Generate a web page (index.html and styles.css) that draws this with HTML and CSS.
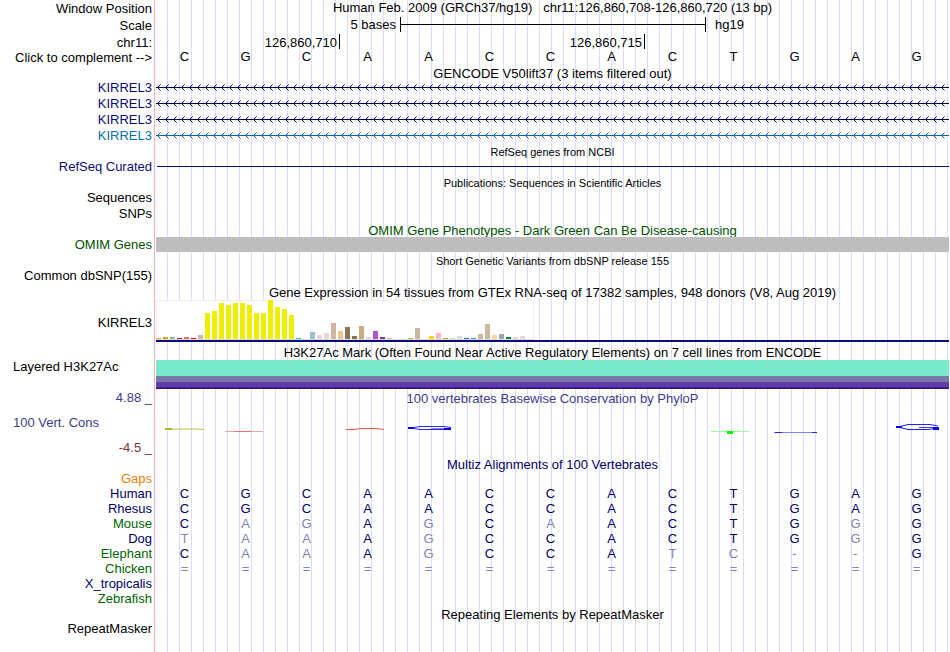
FILE: index.html
```
<!DOCTYPE html>
<html lang="en">
<head>
<meta charset="utf-8">
<title>UCSC Genome Browser chr11:126,860,708-126,860,720</title>
<link rel="stylesheet" href="styles.css">
</head>
<body>
<main class="browser">
  <section class="row ruler"><div class="label">Window Position</div><h1 class="title tight">Human Feb. 2009 (GRCh37/hg19) &nbsp; chr11:126,860,708-126,860,720 (13 bp)</h1></section>
  <section class="row ruler"><div class="label">Scale</div><div class="bases tight">
    <span class="tick-text scale-from">5 bases</span><span class="scale-bar"></span><span class="scale-to">hg19</span></div></section>
  <section class="row ruler"><div class="label">chr11:</div><div class="bases">
    <span class="tick-text mark mark-a">126,860,710</span><span class="tick-text mark mark-b">126,860,715</span></div></section>
  <section class="row sequence"><div class="label">Click to complement --&gt;</div><div class="bases"><span>C</span><span>G</span><span>C</span><span>A</span><span>A</span><span>C</span><span>C</span><span>A</span><span>C</span><span>T</span><span>G</span><span>A</span><span>G</span></div></section>

  <section class="row gap-title"><h2 class="title">GENCODE V50lift37 (3 items filtered out)</h2></section>
  <svg class="defs" aria-hidden="true"><defs>
    <pattern id="chevron-navy" width="8" height="16" patternUnits="userSpaceOnUse"><path d="M0 7.5H8" stroke="#000064"/><path d="M4.5 4.5L1.5 7.5L4.5 10.5" fill="none" stroke="#000064"/></pattern>
    <pattern id="chevron-blue" width="8" height="16" patternUnits="userSpaceOnUse"><path d="M0 7.5H8" stroke="#0c64a0"/><path d="M4.5 4.5L1.5 7.5L4.5 10.5" fill="none" stroke="#0c64a0"/></pattern>
  </defs></svg>
  <section class="row navy"><div class="label">KIRREL3</div><svg class="gene"><rect width="100%" height="16" fill="url(#chevron-navy)"/></svg></section>
  <section class="row navy"><div class="label">KIRREL3</div><svg class="gene"><rect width="100%" height="16" fill="url(#chevron-navy)"/></svg></section>
  <section class="row navy"><div class="label">KIRREL3</div><svg class="gene"><rect width="100%" height="16" fill="url(#chevron-navy)"/></svg></section>
  <section class="row blue"><div class="label">KIRREL3</div><svg class="gene"><rect width="100%" height="16" fill="url(#chevron-blue)"/></svg></section>

  <section class="row heading"><h2 class="title small">RefSeq genes from NCBI</h2></section>
  <section class="row navy"><div class="label">RefSeq Curated</div><div class="refseq"></div></section>
  <section class="row heading"><h2 class="title small">Publications: Sequences in Scientific Articles</h2></section>
  <section class="row"><div class="label">Sequences</div></section>
  <section class="row"><div class="label">SNPs</div></section>
  <section class="row heading green"><h2 class="title">OMIM Gene Phenotypes - Dark Green Can Be Disease-causing</h2></section>
  <section class="row green"><div class="label">OMIM Genes</div><div class="omim"></div></section>
  <section class="row heading"><h2 class="title small">Short Genetic Variants from dbSNP release 155</h2></section>
  <section class="row"><div class="label">Common dbSNP(155)</div></section>

  <section class="row heading gtex-title"><h2 class="title">Gene Expression in 54 tissues from GTEx RNA-seq of 17382 samples, 948 donors (V8, Aug 2019)</h2></section>
  <section class="row gtex"><div class="label">KIRREL3</div><div class="expression">
    <svg width="378" height="40" shape-rendering="crispEdges">
      <path d="M.5 39.5V.5H377.5V39.5" fill="#fff" stroke="#f0f0f0"/>
      <path d="M0 39.5H378" stroke="#dcdcdc"/>
      <g fill="#eeee00"><path d="M49 39v-26h5v26zM56 39v-28h5v28zM63 39v-36h5v36zM70 39v-34h5v34zM77 39v-36h5v36zM84 39v-36h5v36zM91 39v-34h5v34zM98 39v-26h5v26zM105 39v-26h5v26zM112 39v-39h5v39zM119 39v-32h5v32zM126 39v-30h5v30zM133 39v-24h5v24z"/></g>
      <g fill="#cdb79e"><path d="M42 39v-4h5v4zM175 39v-16h5v16zM231 39v-1h5v1zM259 39v-11h5v11zM322 39v-5h5v5zM329 39v-15h5v15z"/></g>
      <g fill="#eed5d2"><path d="M161 39v-4h5v4zM168 39v-6h5v6zM210 39v-2h5v2zM357 39v-2h5v2zM364 39v-3h5v3z"/></g>
      <path d="M0 38h5v1h-5z" fill="#ffa54f"/><path d="M7 37h5v2h-5z" fill="#ee9a00"/><path d="M14 37h5v2h-5z" fill="#8fbc8f"/><path d="M21 38h5v1h-5z" fill="#8b1c62"/><path d="M28 37h5v2h-5z" fill="#ee6a50"/><path d="M35 38h5v1h-5z" fill="#ff0000"/>
      <path d="M140 38h5v1h-5z" fill="#00cdcd"/><path d="M154 32h5v7h-5z" fill="#9ac0cd"/><path d="M182 31h5v8h-5z" fill="#eec591"/><path d="M189 27h5v12h-5zM196 36h5v3h-5z" fill="#8b7355"/><path d="M203 26h5v13h-5z" fill="#cdaa7d"/><path d="M217 31h5v8h-5z" fill="#b452cd"/><path d="M224 37h5v2h-5z" fill="#7a378b"/>
      <path d="M252 38h5v1h-5z" fill="#9acd32"/><path d="M273 36h5v3h-5z" fill="#ffd700"/><path d="M280 33h5v6h-5z" fill="#ffb6c1"/><path d="M287 38h5v1h-5z" fill="#cd9b1d"/><path d="M294 38h5v1h-5z" fill="#b4eeb4"/><path d="M301 36h5v3h-5z" fill="#d9d9d9"/><path d="M308 38h5v1h-5z" fill="#3a5fcd"/><path d="M315 38h5v1h-5z" fill="#1e90ff"/><path d="M336 35h5v4h-5z" fill="#ffd39b"/><path d="M343 34h5v5h-5z" fill="#a6a6a6"/><path d="M350 37h5v2h-5z" fill="#008b45"/>
    </svg></div></section>

  <section class="row align"><h2 class="title">H3K27Ac Mark (Often Found Near Active Regulatory Elements) on 7 cell lines from ENCODE</h2></section>
  <section class="row histone-row"><div class="label start">Layered H3K27Ac</div><div class="histone"></div></section>

  <section class="row phylop"><div class="scale-labels"><span class="limit high">4.88 _</span><span class="start high">100 Vert. Cons</span><span class="limit low">-4.5 _</span></div>
    <div><h2 class="title high phylop-title">100 vertebrates Basewise Conservation by PhyloP</h2>
    <svg class="logos" viewBox="0 0 793 50" preserveAspectRatio="none" fill="none">
      <path d="M9 22.5C15 24 20 23 28 23H40L48 23.5" stroke="#bebe46"/><path d="M9 23H16" stroke="#b4b432" stroke-width="2"/>
      <path d="M69 25.5H107" stroke="#f0a0a0"/><path d="M78 25.5H95" stroke="#e66e6e"/>
      <path d="M190 23.5H198L205 22.5H220L228 23.5" stroke="#ff5046"/>
      <path d="M295 21.5L288 20.5H264L254 22L264 23.500H294" stroke="#2828ff"/><path d="M275 22.5H294" stroke="#8282ff"/><path d="M252 22H258M288 23H295" stroke="#0000ff" stroke-width="2"/>
      <path d="M555 25.500H593" stroke="#96ff96"/><path d="M571 25h6v3h-6z" fill="#00ff00"/>
      <path d="M618 26.500H661" stroke="#8282ff"/><path d="M619 26.500H626M656 26.500H661" stroke="#1e1eff"/>
      <path d="M782 20L774 18.500H752L742 21L752 23.500H772L782 22" stroke="#1e1eff"/><path d="M763 21.500H782" stroke="#3c3cff"/><path d="M740 21H746" stroke="#0000ff" stroke-width="2"/><path d="M777 21h6v3h-6z" fill="#0000ff"/>
    </svg></div></section>

  <section class="row heading multiz"><h2 class="title">Multiz Alignments of 100 Vertebrates</h2></section>
  <section class="row align gaps"><div class="label">Gaps</div></section>
  <section class="row align multiz"><div class="label">Human</div><div class="bases"><span>C</span><span>G</span><span>C</span><span>A</span><span>A</span><span>C</span><span>C</span><span>A</span><span>C</span><span>T</span><span>G</span><span>A</span><span>G</span></div></section>
  <section class="row align multiz"><div class="label">Rhesus</div><div class="bases"><span>C</span><span>G</span><span>C</span><span>A</span><span>A</span><span>C</span><span>C</span><span>A</span><span>C</span><span>T</span><span>G</span><span>A</span><span>G</span></div></section>
  <section class="row align multiz"><div class="label green">Mouse</div><div class="bases"><span>C</span><i>A</i><i>G</i><span>A</span><i>G</i><span>C</span><i>A</i><span>A</span><span>C</span><span>T</span><span>G</span><i>G</i><span>G</span></div></section>
  <section class="row align multiz"><div class="label">Dog</div><div class="bases"><i>T</i><i>A</i><i>A</i><span>A</span><i>G</i><span>C</span><span>C</span><span>A</span><span>C</span><span>T</span><span>G</span><i>G</i><span>G</span></div></section>
  <section class="row align multiz"><div class="label green">Elephant</div><div class="bases"><span>C</span><i>A</i><i>A</i><span>A</span><i>G</i><span>C</span><span>C</span><span>A</span><i>T</i><i>C</i><i>-</i><i>-</i><span>G</span></div></section>
  <section class="row align multiz"><div class="label green">Chicken</div><div class="bases"><i>=</i><i>=</i><i>=</i><i>=</i><i>=</i><i>=</i><i>=</i><i>=</i><i>=</i><i>=</i><i>=</i><i>=</i><i>=</i></div></section>
  <section class="row align multiz"><div class="label">X_tropicalis</div></section>
  <section class="row align multiz"><div class="label green">Zebrafish</div></section>
  <section class="row heading"><h2 class="title">Repeating Elements by RepeatMasker</h2></section>
  <section class="row"><div class="label">RepeatMasker</div></section>
</main>
</body>
</html>
```
FILE: styles.css
```
* { box-sizing: border-box; }

body {
  margin: 0;
  background: #fff;
  color: #000;
  font: 13px/16px "Liberation Sans", Arial, sans-serif;
}

/* Red separator, blank label column, then the 12px guide lines. */
.browser {
  min-height: 100vh;
  padding-right: 1px;
  background:
    linear-gradient(#ffb4b4, #ffb4b4) 154px 0 / 1px 100% no-repeat,
    linear-gradient(#fff, #fff) 0 0 / 160px 100% no-repeat,
    linear-gradient(to right, #dcdcf8 1px, transparent 1px) 167px 0 / 12px 100% repeat-x;
}

.row {
  display: grid;
  grid-template-columns: 152px minmax(0, 1fr);
  column-gap: 4px;
  min-height: 16px;
}

.ruler { min-height: 17px; line-height: 17px; }
.sequence { min-height: 15px; line-height: 14px; }
.sequence .bases { line-height: 12px; }
.align { min-height: 15px; line-height: 15px; }
.heading { min-height: 15px; padding-top: 2px; line-height: 13px; }
.gap-title { min-height: 14px; padding-top: 1px; line-height: 13px; }
.gtex-title { min-height: 16px; }

.label { text-align: right; white-space: nowrap; }
.start { text-align: left; padding-left: 13px; }

.title {
  grid-column: 2;
  margin: 0;
  font-size: 13px;
  font-weight: normal;
  line-height: inherit;
  text-align: center;
  white-space: nowrap;
}
.small { font-size: 11px; }
.tight { line-height: 15px; }

.navy { color: #0c0c78; }
.blue { color: #0c6eaa; }
.green { color: #005000; }
.multiz { color: #000064; }
.multiz .green { color: #006400; }
.gaps { color: #e6820a; }
.high { color: #3c3c8c; }
.low { color: #783232; }

.bases {
  display: grid;
  grid-template-columns: repeat(13, 1fr);
  margin: 0 2px 0 -2px;
  text-align: center;
}
.bases i { font-style: normal; color: #8282b4; }

.tick-text { text-align: right; white-space: nowrap; }
.scale-from { grid-column: 1 / 5; padding-right: 2px; }
.scale-bar {
  grid-column: 5 / 10;
  height: 15px;
  margin: 0 -3px 0 2px;
  border: solid #000;
  border-width: 0 1px;
  background: linear-gradient(#000, #000) 0 7px / 100% 1px no-repeat;
}
.scale-to { grid-column: 10 / 12; padding-left: 12px; text-align: left; }
.mark { height: 15px; margin-right: -3px; padding-right: 2px; border-right: 1px solid #000; }
.mark-a { grid-column: 1 / 4; }
.mark-b { grid-column: 4 / 9; }

.defs { display: block; width: 0; height: 0; }
.gene { display: block; width: 100%; height: 16px; }
.refseq { height: 1px; margin: 7px 0 0 1px; background: #0c0c78; }
.omim { height: 15px; background: #bebebe; }

.gtex { min-height: 45px; line-height: 45px; }
.expression { align-self: start; border-bottom: 2px solid #0c0c78; }
.expression svg { display: block; }

.histone-row { min-height: 30px; line-height: 14px; }
.histone {
  height: 29px;
  background: linear-gradient(#78ebcd 16px, #7878aa 16px 22px, #643caa 22px 27px, #3c1ea0 27px 28px, #32146e 28px);
}

.phylop { min-height: 66px; }
.phylop-title { padding-top: 1px; line-height: 15px; }
.scale-labels { display: flex; flex-direction: column; justify-content: space-between; }
.limit { text-align: right; }
.logos { display: block; width: 100%; height: 50px; }
```
